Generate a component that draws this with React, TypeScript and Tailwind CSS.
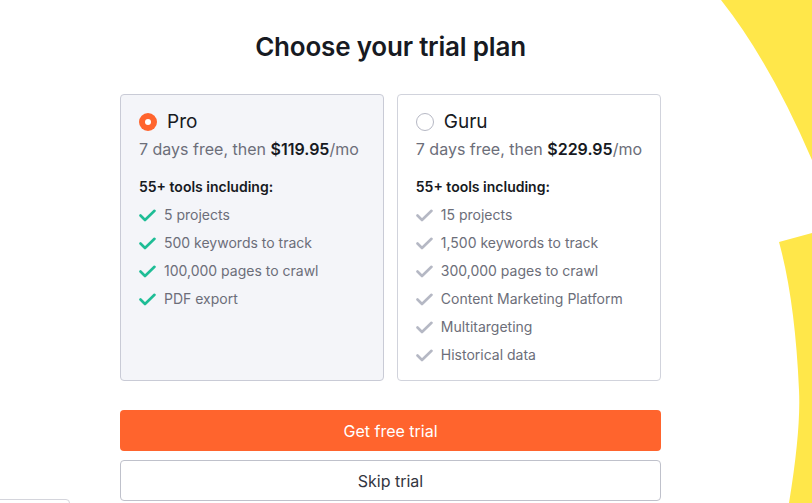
import React from 'react';

type Plan = {
  name: string;
  price: string;
  selected: boolean;
  features: string[];
};

const plans: Plan[] = [
  {
    name: 'Pro',
    price: '$119.95',
    selected: true,
    features: ['5 projects', '500 keywords to track', '100,000 pages to crawl', 'PDF export'],
  },
  {
    name: 'Guru',
    price: '$229.95',
    selected: false,
    features: [
      '15 projects',
      '1,500 keywords to track',
      '300,000 pages to crawl',
      'Content Marketing Platform',
      'Multitargeting',
      'Historical data',
    ],
  },
];

function Check({ active }: { active: boolean }) {
  return (
    <svg width="17" height="13" viewBox="0 0 17 13" className="shrink-0">
      <path
        d="M1.5 6.5 L6 11 L15.5 1.8"
        fill="none"
        stroke={active ? '#1ebd96' : '#b5b8c4'}
        strokeWidth="2.6"
        strokeLinecap="round"
        strokeLinejoin="round"
      />
    </svg>
  );
}

function Radio({ on }: { on: boolean }) {
  if (on) {
    return (
      <span className="w-[18px] h-[18px] rounded-full bg-[#ff642d] flex items-center justify-center shrink-0">
        <span className="w-[6px] h-[6px] rounded-full bg-white" />
      </span>
    );
  }
  return <span className="w-[18px] h-[18px] rounded-full border-[1.5px] border-[#b6b8c4] bg-white shrink-0" />;
}

function PlanCard({ plan }: { plan: Plan }) {
  return (
    <div
      className={`flex-1 rounded-[4px] border pt-[13px] pb-[15px] px-[18px] ${
        plan.selected ? 'bg-[#f4f5f9] border-[#c9cbd6]' : 'bg-white border-[#d1d3dc]'
      }`}
    >
      <div className="flex items-center gap-[10px] h-7">
        <Radio on={plan.selected} />
        <span className="text-[19px] leading-7 text-[#171a22]">{plan.name}</span>
      </div>
      <div className="text-[16px] leading-6 text-[#6c6e79] mt-px whitespace-nowrap">
        7 days free, then <span className="font-semibold text-[#171a22]">{plan.price}</span>/mo
      </div>
      <div className="mt-4 text-[14px] leading-5 font-semibold text-[#171a22]">55+ tools including:</div>
      <ul className="mt-2 flex flex-col gap-2">
        {plan.features.map((f) => (
          <li key={f} className="flex items-center gap-[8px] text-[14px] leading-5 text-[#6c6e79]">
            <Check active={plan.selected} />
            {f}
          </li>
        ))}
      </ul>
    </div>
  );
}

export default function App() {
  return (
    <div className="relative w-full h-[503px] overflow-hidden bg-white font-['Inter',sans-serif]">
      {/* yellow decoration on the right */}
      <svg className="absolute top-0 right-0 pointer-events-none" width="100" height="503" viewBox="712 0 100 503">
        <path d="M721 0 Q770 62 812 160 L812 0 Z" fill="#ffe74a" />
        <path d="M779 242 L812 233 L830 233 L830 503 L789 503 Q801 430 799 390 Q795 300 779 242 Z" fill="#ffe74a" />
      </svg>

      {/* bottom-left stub */}
      <div className="absolute left-[-10px] top-[499px] w-[80px] h-[20px] rounded-[4px] border border-[#d4d5dc] bg-white" />

      <div className="relative w-[541px] ml-[120px] pt-[31px]">
        <h1 className="text-center text-[26px] leading-8 font-semibold text-[#171a22] tracking-[-0.2px]">
          Choose your trial plan
        </h1>
        <div className="mt-[31px] flex gap-[13px]">
          {plans.map((p) => (
            <PlanCard key={p.name} plan={p} />
          ))}
        </div>
        <button className="mt-[29px] w-full h-[41px] rounded-[4px] bg-[#ff642d] text-white text-[16px]">
          Get free trial
        </button>
        <button className="mt-[9px] w-full h-[41px] rounded-[4px] border border-[#bfc1cb] bg-white text-[#333641] text-[16px]">
          Skip trial
        </button>
      </div>
    </div>
  );
}
